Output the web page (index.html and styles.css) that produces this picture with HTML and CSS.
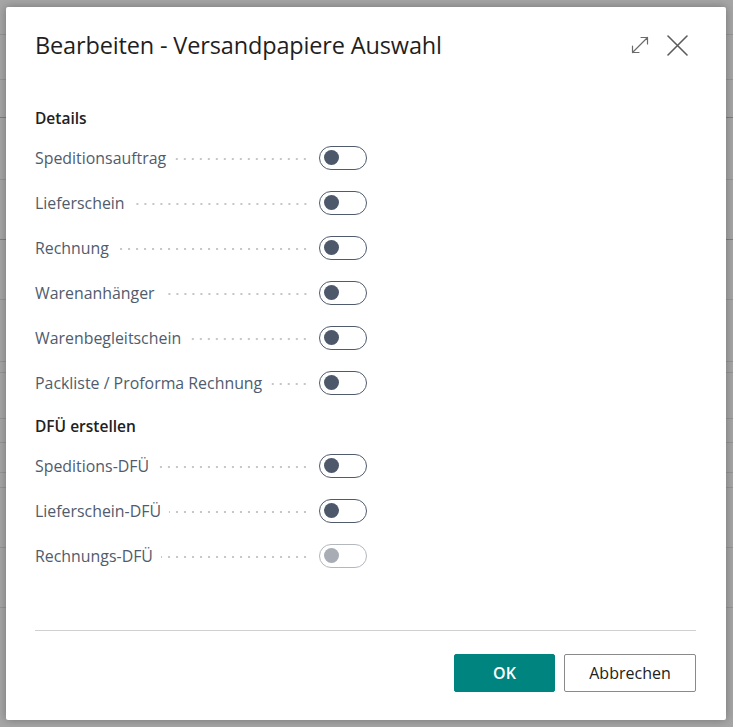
FILE: index.html
```html
<!DOCTYPE html>
<html lang="de">
<head>
<meta charset="utf-8">
<title>Bearbeiten - Versandpapiere Auswahl</title>
<link rel="stylesheet" href="styles.css">
</head>
<body>
<div class="page">
  <div class="bg-rows">
    <div class="bg-row r35"></div>
    <div class="bg-row r45"></div>
    <div class="bg-row r38 dark"></div>
    <div class="bg-row r62"></div>
    <div class="bg-row r60 dark"></div>
    <div class="bg-row r60"></div>
    <div class="bg-row r62"></div>
    <div class="bg-row r11"></div>
    <div class="bg-row r46"></div>
    <div class="bg-row r24"></div>
    <div class="bg-row r30"></div>
    <div class="bg-row r15"></div>
    <div class="bg-row r60"></div>
    <div class="bg-row r60"></div>
  </div>

  <div class="dialog" role="dialog" aria-label="Bearbeiten - Versandpapiere Auswahl">
    <header class="dlg-head">
      <h1 class="dlg-title">Bearbeiten - Versandpapiere Auswahl</h1>
      <div class="dlg-actions">
        <button class="icon-btn" aria-label="Maximieren">
          <svg width="18" height="18" viewBox="0 0 18 18" fill="none" stroke="#6b6b6b" stroke-width="1.2" stroke-linecap="round" stroke-linejoin="round"><path d="M1.5 16.5 L16.5 1.5 M10 1.5 H16.5 V8 M1.5 10 V16.5 H8"/></svg>
        </button>
        <button class="icon-btn" aria-label="Schließen">
          <svg width="21" height="21" viewBox="0 0 21 21" fill="none" stroke="#5c5c5c" stroke-width="1.6" stroke-linecap="round"><path d="M1 1 L20 20 M20 1 L1 20"/></svg>
        </button>
      </div>
    </header>

    <div class="dlg-body">
      <section class="group">
        <h2 class="group-title">Details</h2>
        <div class="field"><span class="label">Speditionsauftrag</span><span class="dots"></span><span class="toggle"><span class="knob"></span></span></div>
        <div class="field"><span class="label">Lieferschein</span><span class="dots"></span><span class="toggle"><span class="knob"></span></span></div>
        <div class="field"><span class="label">Rechnung</span><span class="dots"></span><span class="toggle"><span class="knob"></span></span></div>
        <div class="field"><span class="label">Warenanhänger</span><span class="dots"></span><span class="toggle"><span class="knob"></span></span></div>
        <div class="field"><span class="label">Warenbegleitschein</span><span class="dots"></span><span class="toggle"><span class="knob"></span></span></div>
        <div class="field"><span class="label">Packliste / Proforma Rechnung</span><span class="dots"></span><span class="toggle"><span class="knob"></span></span></div>
      </section>
      <section class="group">
        <h2 class="group-title">DFÜ erstellen</h2>
        <div class="field"><span class="label">Speditions-DFÜ</span><span class="dots"></span><span class="toggle"><span class="knob"></span></span></div>
        <div class="field"><span class="label">Lieferschein-DFÜ</span><span class="dots"></span><span class="toggle"><span class="knob"></span></span></div>
        <div class="field"><span class="label">Rechnungs-DFÜ</span><span class="dots"></span><span class="toggle disabled"><span class="knob"></span></span></div>
      </section>
    </div>

    <footer class="dlg-foot">
      <button class="btn btn-primary">OK</button>
      <button class="btn btn-secondary">Abbrechen</button>
    </footer>
  </div>
</div>
</body>
</html>
```

FILE: styles.css
```css
* { box-sizing: border-box; }

html, body {
  margin: 0;
  padding: 0;
}

body {
  width: 733px;
  height: 727px;
  overflow: hidden;
  background: #a6a6a6;
  font-family: "Open Sans", "Noto Sans", "Liberation Sans", sans-serif;
}

.page {
  position: relative;
  width: 733px;
  height: 727px;
}

.bg-rows {
  display: flex;
  flex-direction: column;
}

.bg-row {
  border-bottom: 1px solid #959595;
}
.bg-row.dark { border-bottom-color: #7e7e7e; }
.r35 { height: 35px; }
.r45 { height: 45px; }
.r38 { height: 38px; }
.r62 { height: 62px; }
.r60 { height: 60px; }
.r11 { height: 11px; }
.r46 { height: 46px; }
.r24 { height: 24px; }
.r30 { height: 30px; }
.r15 { height: 15px; }

.dialog {
  position: absolute;
  left: 6px;
  top: 7px;
  width: 720px;
  height: 713px;
  background: #ffffff;
  border-radius: 2px;
  box-shadow: 0 0 10px rgba(0, 0, 0, 0.3);
  display: flex;
  flex-direction: column;
  padding: 24px 30px 28px 29px;
}

.dlg-head {
  display: flex;
  align-items: center;
  justify-content: space-between;
  height: 28px;
}

.dlg-title {
  margin: 0;
  font-size: 23.5px;
  font-weight: 400;
  color: #1f1f1f;
  line-height: 28px;
  letter-spacing: -0.15px;
}

.dlg-actions {
  display: flex;
  align-items: center;
  gap: 18px;
  margin-right: 8px;
}

.icon-btn {
  border: 0;
  background: none;
  padding: 0;
  display: flex;
  cursor: pointer;
}

.dlg-body {
  padding-top: 47px;
}

.group-title {
  margin: 0 0 5px;
  font-size: 15.5px;
  font-weight: 600;
  color: #212121;
  line-height: 24px;
}

.group + .group .group-title {
  margin-top: 9px;
}

.field {
  display: flex;
  align-items: center;
  height: 45px;
  width: 332px;
}

.label {
  font-size: 15.9px;
  color: #505c6d;
  white-space: nowrap;
}

.dots {
  flex: 1;
  height: 4px;
  margin: 2px 10px 0 8px;
  background-image: radial-gradient(circle, #c6c6c6 0.95px, transparent 1.35px);
  background-size: 8px 4px;
  background-position: right center;
  background-repeat: repeat-x;
}

.toggle {
  position: relative;
  flex: none;
  width: 48px;
  height: 24px;
  border: 1px solid #505c6d;
  border-radius: 12px;
  display: flex;
  align-items: center;
  padding-left: 4px;
}

.knob {
  width: 15px;
  height: 15px;
  border-radius: 50%;
  background: #4d586b;
}

.toggle.disabled { border-color: #b3b7be; }
.toggle.disabled .knob { background: #a8adb5; }

.dlg-foot {
  margin-top: auto;
  border-top: 1px solid #d0d0d0;
  padding-top: 23px;
  display: flex;
  justify-content: flex-end;
  gap: 9px;
}

.btn {
  height: 38px;
  border-radius: 2px;
  font-family: inherit;
  font-size: 16px;
  cursor: pointer;
}

.btn-primary {
  width: 101px;
  background: #00847f;
  border: 1px solid #00847f;
  color: #ffffff;
  font-weight: 600;
}

.btn-secondary {
  width: 132px;
  background: #ffffff;
  border: 1px solid #8a8a8a;
  color: #212121;
}
```
